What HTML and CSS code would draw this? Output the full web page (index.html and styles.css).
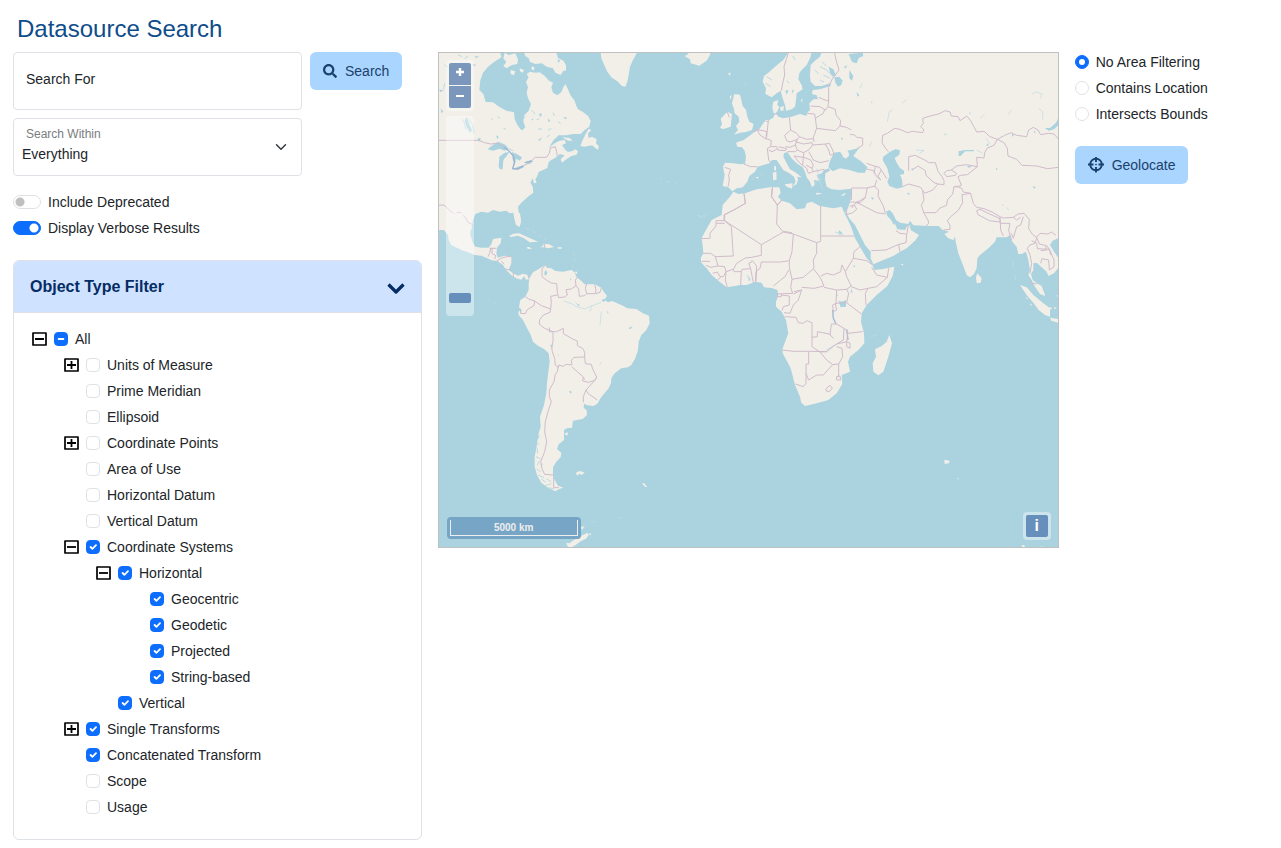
FILE: index.html
```html
<!DOCTYPE html>
<html lang="en">
<head>
<meta charset="utf-8">
<meta name="viewport" content="width=device-width, initial-scale=1">
<title>Datasource Search</title>
<link rel="stylesheet" href="styles.css">
</head>
<body>
<svg class="sprite" width="0" height="0" aria-hidden="true">
  <symbol id="plus" viewBox="0 0 15 14"><path d="M1 1H14V13H1Z" fill="none" stroke="#000" stroke-width="1.700" stroke-linejoin="round"/><path d="M3 7H12M7.500 3V11" stroke="#000" stroke-width="1.800"/></symbol>
  <symbol id="minus" viewBox="0 0 15 14"><path d="M1 1H14V13H1Z" fill="none" stroke="#000" stroke-width="1.700" stroke-linejoin="round"/><path d="M3 7H12" stroke="#000" stroke-width="1.800"/></symbol>
</svg>
<main class="page">
  <h1 class="title">Datasource Search</h1>
  <div class="columns">
    <form class="search" onsubmit="return false">
      <div class="search-row">
        <div class="fields">
          <div class="field">
            <input class="control" type="text" id="term">
            <label class="field-label" for="term">Search For</label>
          </div>
          <div class="field">
            <select class="control control-select" id="within"><option>Everything</option></select>
            <label class="field-label field-label-small" for="within">Search Within</label>
          </div>
        </div>
        <button class="btn" type="submit">
          <svg width="14" height="14" viewBox="0 0 512 512" fill="currentColor" aria-hidden="true"><path d="M505 442.700L405.300 343c-4.500-4.500-10.600-7-17-7H372c27.600-35.300 44-79.700 44-128C416 93.100 322.900 0 208 0S0 93.100 0 208s93.100 208 208 208c48.300 0 92.700-16.400 128-44v16.300c0 6.400 2.500 12.500 7 17l99.700 99.700c9.400 9.400 24.600 9.400 33.900 0l28.300-28.300c9.400-9.400 9.400-24.600.1-34zM208 336c-70.700 0-128-57.200-128-128 0-70.700 57.200-128 128-128 70.700 0 128 57.200 128 128 0 70.700-57.200 128-128 128z"/></svg>
          Search
        </button>
      </div>
      <div class="options">
        <label class="choice"><input class="switch" type="checkbox" role="switch">Include Deprecated</label>
        <label class="choice"><input class="switch" type="checkbox" role="switch" checked>Display Verbose Results</label>
      </div>
      <section class="card">
        <button class="card-head" type="button" aria-expanded="true">
          Object Type Filter
          <svg width="18" height="18" viewBox="0 0 18 18" fill="none" aria-hidden="true"><path d="M1.500 6.500L9 14L16.500 6.500" stroke="currentColor" stroke-width="3.200" stroke-linejoin="round"/></svg>
        </button>
        <ul class="tree tree-root">
          <li>
            <div class="node"><button class="toggle" type="button" aria-label="Collapse All"><svg><use href="#minus"/></svg></button><label class="choice"><input class="check check-mixed" type="checkbox" aria-checked="mixed">All</label></div>
            <ul class="tree">
              <li><div class="node"><button class="toggle" type="button" aria-label="Expand Units of Measure"><svg><use href="#plus"/></svg></button><label class="choice"><input class="check" type="checkbox">Units of Measure</label></div></li>
              <li><div class="node leaf"><label class="choice"><input class="check" type="checkbox">Prime Meridian</label></div></li>
              <li><div class="node leaf"><label class="choice"><input class="check" type="checkbox">Ellipsoid</label></div></li>
              <li><div class="node"><button class="toggle" type="button" aria-label="Expand Coordinate Points"><svg><use href="#plus"/></svg></button><label class="choice"><input class="check" type="checkbox">Coordinate Points</label></div></li>
              <li><div class="node leaf"><label class="choice"><input class="check" type="checkbox">Area of Use</label></div></li>
              <li><div class="node leaf"><label class="choice"><input class="check" type="checkbox">Horizontal Datum</label></div></li>
              <li><div class="node leaf"><label class="choice"><input class="check" type="checkbox">Vertical Datum</label></div></li>
              <li>
                <div class="node"><button class="toggle" type="button" aria-label="Collapse Coordinate Systems"><svg><use href="#minus"/></svg></button><label class="choice"><input class="check" type="checkbox" checked>Coordinate Systems</label></div>
                <ul class="tree">
                  <li>
                    <div class="node"><button class="toggle" type="button" aria-label="Collapse Horizontal"><svg><use href="#minus"/></svg></button><label class="choice"><input class="check" type="checkbox" checked>Horizontal</label></div>
                    <ul class="tree">
                      <li><div class="node leaf"><label class="choice"><input class="check" type="checkbox" checked>Geocentric</label></div></li>
                      <li><div class="node leaf"><label class="choice"><input class="check" type="checkbox" checked>Geodetic</label></div></li>
                      <li><div class="node leaf"><label class="choice"><input class="check" type="checkbox" checked>Projected</label></div></li>
                      <li><div class="node leaf"><label class="choice"><input class="check" type="checkbox" checked>String-based</label></div></li>
                    </ul>
                  </li>
                  <li><div class="node leaf"><label class="choice"><input class="check" type="checkbox" checked>Vertical</label></div></li>
                </ul>
              </li>
              <li><div class="node"><button class="toggle" type="button" aria-label="Expand Single Transforms"><svg><use href="#plus"/></svg></button><label class="choice"><input class="check" type="checkbox" checked>Single Transforms</label></div></li>
              <li><div class="node leaf"><label class="choice"><input class="check" type="checkbox" checked>Concatenated Transform</label></div></li>
              <li><div class="node leaf"><label class="choice"><input class="check" type="checkbox">Scope</label></div></li>
              <li><div class="node leaf"><label class="choice"><input class="check" type="checkbox">Usage</label></div></li>
            </ul>
          </li>
        </ul>
      </section>
    </form>

    <section class="map" aria-label="Map">
      <svg class="world" viewBox="0 0 1857 1482" preserveAspectRatio="xMidYMid slice" aria-hidden="true">
        <!-- North America, Greenland -->
        <g transform="translate(-3 -9)">
          <path class="land" d="M0,0L185,0 190,22 165,38 150,50 135,68 127,90 124,120 136,132 143,156 165,157 180,168 205,182 228,187 230,208 238,224 246,236 253,241 262,232 256,215 259,195 272,182 279,162 270,145 266,128 270,112 264,96 272,82 266,72 276,65 290,68 305,67 320,78 333,92 345,98 340,112 345,128 358,136 370,126 376,112 382,102 390,118 397,135 410,152 415,168 420,178 435,186 450,198 458,212 454,230 440,240 428,252 405,252 385,256 362,256 347,270 332,294 350,280 365,272 380,270 384,280 372,285 382,300 398,312 420,304 416,314 400,318 385,328 372,338 368,328 380,316 365,312 355,322 340,330 332,336 328,354 315,360 302,366 298,378 292,388 296,398 288,400 284,385 277,398 284,410 286,428 270,440 250,458 240,470 242,485 248,505 246,530 234,525 229,505 226,488 215,490 205,482 185,485 165,480 150,488 130,485 112,492 105,510 100,540 0,540Z"/>
          <path class="land" d="M256,0L262,18 272,25 276,36 292,42 312,40 326,50 345,55 352,68 368,75 376,62 384,62 384,46 376,32 360,24 352,0ZM200,8L212,15 232,10 240,28 238,42 222,45 205,55 196,48 205,36 196,25ZM218,60L232,64 228,76 218,72ZM245,55L258,60 254,68 246,64ZM282,48L290,54 286,62 280,56ZM487,0L490,25 500,48 508,65 520,82 540,95 552,108 562,110 568,95 572,75 576,50 585,30 596,10 598,0ZM452,236L444,250 434,270 427,288 440,290 462,286 480,300 482,288 474,280 476,268 462,260 452,264 450,250 460,240ZM388,306L402,304 412,298 420,304 408,314 392,316ZM372,262L395,264 404,272 390,272Z"/>
          <path class="water" d="M148,298L165,285 180,275 202,284 212,296 200,302 185,296 165,302ZM182,350L184,320 200,308 214,306 206,318 196,330 194,358 186,358ZM222,306L236,312 252,322 246,332 234,326 230,345 224,330ZM222,358L240,350 254,346 258,352 240,360ZM256,338L275,332 286,334 275,342ZM300,270L312,262 306,272ZM86,200L94,222 102,240 96,248 86,232 80,212ZM302,192L312,190 308,202ZM376,200L388,203 382,208ZM280,206L286,206 284,212ZM174,256L182,260 178,268ZM120,265L128,264 126,274 120,273ZM104,42L114,44 106,50ZM4,118L18,122 6,126ZM8,176L16,184 10,190ZM110,18L124,20 114,24ZM358,28L362,40 366,30ZM330,205L338,215 330,214Z"/>
          <path class="scratch" d="M72,206L80,222 84,240M92,206L104,224 108,250M60,14L72,20M80,26L90,18M20,44L28,52M16,118L20,100M280,180L292,192M300,238L312,236M326,262L336,254M212,296L226,302M345,188L350,198M196,234L204,238M255,205L262,200M178,200L186,204M295,210L304,206M330,240L340,236M160,205L166,210M360,215L368,220"/>
          <path class="border" d="M0,271H122L140,278 158,282 178,280 196,290 214,304 228,318 230,336 224,356 240,358 258,346 272,340 292,322 325,322 334,310 337,294 352,290 356,306 358,320M0,466L18,465 34,480 48,492 66,486 80,502 90,512"/>
          <path class="lake-line" d="M198,292L214,304 226,318 230,336 224,356 240,356 256,348M262,338L282,332"/>
        </g>
        <!-- Central and South America -->
        <g transform="translate(-3 486)">
          <path class="land" d="M0,-5L102,-5 106,8 98,30 97,60 105,85 112,95 130,98 152,98 160,88 165,72 190,68 188,85 178,97 175,115 180,128 200,122 220,125 220,145 212,165 225,175 240,182 255,176 270,180 274,192 264,194 258,184 250,194 235,190 222,182 205,165 195,150 178,138 160,136 148,130 130,122 110,120 90,112 70,105 40,90 32,75 30,60 15,42 0,30ZM228,-5L246,-5 249,20 244,36 234,24 229,8Z"/>
          <path class="land" d="M274,190L285,172 302,162 322,150 326,158 340,160 352,168 375,170 400,165 410,172 415,185 430,198 440,208 470,208 490,218 497,230 507,242 500,255 510,262 522,258 550,270 568,280 595,282 615,295 633,302 635,325 625,345 610,360 602,380 600,405 592,430 580,450 570,457 550,460 530,475 520,490 519,505 512,520 502,532 490,546 478,566 466,573 448,571 438,566 437,578 446,586 447,600 434,612 405,617 402,638 386,640 378,645 378,675 362,688 357,702 370,713 368,727 355,740 345,757 345,782 350,795 360,812 376,818 364,822 352,829 330,818 310,803 297,780 290,755 290,725 296,695 302,655 308,635 306,605 318,570 325,535 327,505 331,470 335,440 332,415 318,402 300,392 285,380 278,360 265,335 255,315 242,300 241,290 248,285 243,275 247,255 262,245 272,225 272,205Z"/>
          <path class="land" d="M213,63L226,56 244,55 266,65 282,72 300,80 275,82 258,70 240,62 218,66ZM306,97L316,92 316,86 334,88 348,96 330,100 320,97ZM265,97L274,96 282,101 270,102ZM358,97L371,97 371,101 360,101ZM413,774L424,768 440,772 432,780 424,776 418,782ZM378,656L390,652 388,662ZM410,170L418,170 416,178ZM612,806L618,804 628,816 622,816Z"/>
          <path class="faint" d="M262,38L274,44M284,48L294,56M300,60L308,68M316,70L324,74M404,110L410,122M410,130L410,142M406,152L402,160M150,255L154,258M166,262L172,265M460,920H472M540,908L552,910"/>
          <path class="water" d="M320,170L324,165 328,175 323,182 319,178ZM396,190L400,192 396,198ZM335,388L345,392 342,400ZM246,278L252,288 246,292ZM570,340L584,334 578,342ZM392,527L402,530 398,536ZM508,288L512,292 508,296ZM418,266L426,270 420,274ZM490,255L504,250 498,262Z"/>
          <path class="scratch thin" d="M378,258L400,266 418,276 440,282 462,272 490,262M462,272L455,290M490,290L486,330M420,270L412,262M360,418L362,424M484,450L490,442"/>
          <path class="scratch" d="M294,680L304,690M298,700V715M294,725L308,732M304,738L298,750M296,762L308,770M300,780L318,788M310,792L324,802M322,812L340,806M326,792L340,800M332,818L348,822M312,745V752M304,660L300,672"/>
          <path class="border" d="M322,150L312,162 312,185 325,195 340,204 356,206 358,232 362,248 380,246 388,240 384,224 400,222 414,212 412,195 420,185M414,212L422,222 424,244 440,242 446,236 442,220 446,206M446,236L472,236 474,226 470,208M474,236L486,232 490,218M262,245L272,252 290,258 310,272 338,282 340,262 338,244 358,240M290,258L288,272 268,284 262,296 248,295 247,288M338,282L336,292 316,300 305,314 304,328 320,340 334,346 345,350 345,380 341,396 343,410 350,430 352,450 362,458M334,338L334,350 356,350 376,340 376,356 404,372 418,378 418,392 434,400 440,412 440,426 408,427 400,436 402,450 384,448 376,454 362,450 358,470 352,478 348,500 334,525 334,545 340,560 330,590 322,620 320,650 326,680 320,710 308,740 312,762 320,778 346,780M347,785V818H362M440,426L442,446 460,448 464,462 476,486 470,496 452,502 434,498 436,486 402,456M436,486L440,494M476,490L444,525 450,535 478,555M444,525L436,545 436,562M158,100L155,115 150,125M155,100H176M162,98V116L174,122 170,132M176,138L190,130 202,126 220,124M190,138L198,148M202,162L216,165M226,172V186M270,180L272,190M74,0L84,10 90,22 102,28M320,86V98"/>
        </g>
        <!-- Africa, Madagascar -->
        <g transform="translate(753 381)">
          <path class="land" d="M462,95L470,112 485,145 495,175 510,200 530,235 548,255 552,270 575,268 613,260 608,288 592,318 560,345 530,375 515,400 513,425 522,460 523,490 505,510 480,530 474,545 480,575 455,585 457,612 440,640 415,660 380,670 345,678 334,668 330,650 315,615 305,575 300,560 278,520 278,505 295,460 288,420 275,395 258,380 258,365 265,345 262,330 245,324 222,322 215,308 195,305 170,315 150,315 135,318 110,322 85,302 65,285 50,265 35,250 32,235 40,220 38,195 35,175 45,155 65,120 95,105 98,75 120,50 130,35 145,42 165,40 200,28 240,22 268,22 272,38 264,50 275,62 300,70 320,88 345,85 350,70 365,65 390,78 430,85 455,80Z"/>
          <path class="land" d="M598,465L606,490 595,530 580,575 565,586 550,575 548,550 558,530 555,508 575,498 590,485Z"/>
          <path class="water" d="M446,362L456,365 468,360 468,380 452,382ZM176,290L182,298 176,304ZM484,325L488,340 482,336ZM490,256L497,258 492,262ZM440,342L444,346 438,350ZM446,150L458,160 448,164Z"/>
          <path class="faint" d="M30,112L44,106M24,104L30,110M230,358L234,362M545,470L560,464M205,390L208,392"/>
          <path class="scratch" d="M410,510L436,494M436,156L458,164M172,285L180,302M460,90L470,112"/>
          <path class="lake-line" d="M428,390L430,415 438,432M470,448L474,480"/>
          <path class="border" d="M162,40L166,70 135,88 104,104V122L214,194 280,156 310,162 380,188 392,184V78M246,25L244,50 262,75 260,132 278,154 306,158M262,75L275,62M392,168H492M104,122L78,122 78,138 60,160 60,175 34,176M104,130H80M124,140L130,228 76,230 62,220 38,220M124,140L104,122M214,194L214,226 184,232 166,234 140,250 130,268 108,275 104,260 84,258 76,230M214,246H272L298,242 300,235 306,215 310,162M380,188V220L370,240 372,265 340,292 306,298 298,262 298,242M36,244H60M48,256L62,262 84,258M68,280L82,276 90,290 100,290 108,275 106,300 112,322M82,300L92,292M130,268L132,275 154,275 152,315M154,275L156,268 182,266 190,308M182,266L176,250 186,245M196,305L198,275 210,265 214,246M185,240L200,258 198,305M250,318L272,300 285,290 296,270M306,298L302,322 308,340 258,342M258,350H274V342M310,342L335,330 325,360 310,375 300,400 282,398M274,345L298,348 298,375 280,380 276,392M335,330L312,335M335,322L372,325 402,318 392,295 372,268M392,288L410,280 430,285 452,275 456,255 466,275 470,290 484,318 470,328 440,330 402,322M466,275L490,235 492,215 510,200M490,235L530,242 548,255M545,262L560,285 592,292 560,320 534,325 510,330 484,320M592,292L596,265M534,325L526,340 528,375M440,330L438,370 470,368 476,340 470,328M470,368L514,402M438,370L428,375 430,395 440,390 436,372M440,432L424,432 420,465 430,475 418,462 382,455 382,470 366,472V428L350,422 340,430 325,428 318,412 284,410M440,432L462,445 460,480 435,495 410,515 390,516 366,500V470M278,510L310,514 366,514 410,515M475,460L518,455M462,445L474,455 470,485 480,490 480,505 470,500 470,485 440,492M356,516V552H348V610L340,620 316,612M390,516L410,540 428,554 446,552 458,530 456,505 440,500M428,554L400,585 380,585 356,600 348,580M446,552L446,590M440,590L450,588 452,600 440,600ZM408,626L420,616 427,624 418,635 408,632Z"/>
        </g>
        <!-- Asia -->
        <g transform="translate(1233 381)">
          <path class="land" d="M-5,-400L640,-400 640,172 625,174 608,182 600,195 612,215 626,235 626,262 612,280 595,288 590,275 575,262 560,248 550,250 550,270 543,282 548,300 560,310 575,318 586,348 570,342 555,320 545,300 535,285 540,270 535,240 528,215 515,222 505,222 500,200 487,185 480,165 470,172 440,172 435,185 415,205 390,225 382,235 380,265 372,282 360,292 350,285 340,258 325,220 318,190 315,170 310,180 295,175 283,162 297,155 278,150 266,138 235,138 190,136 180,122 175,132 150,128 138,120 128,100 118,90 108,95 112,108 125,122 130,135 134,130 142,148 165,150 172,138 180,136 182,150 207,165 195,182 170,205 150,215 130,228 100,240 70,253 62,235 62,215 45,195 30,165 15,135 0,118 -14,96 -6,85 2,60 5,22Z"/>
          <path class="land" d="M382,280L395,295 392,308 380,310 378,292ZM510,315L530,322 550,345 580,370 600,385 600,410 585,405 566,390 550,368 530,345ZM600,413L630,418 630,430 604,422ZM598,380L606,384 602,390ZM528,350L534,356 530,358ZM540,370L546,374 542,378ZM152,252L160,252 158,257ZM612,380L620,384 614,388ZM620,345L628,348 626,356Z"/>
          <path class="water" d="M100,-70L120,-85 136,-92 150,-90 148,-76 134,-66 140,-52 150,-36 162,-28 162,-18 150,-16 156,-2 158,22 140,26 118,18 112,5 118,-10 112,-35 98,-60ZM326,-86L345,-90 372,-90 372,-86 345,-86 332,-72 326,-72ZM584,-156L600,-156 618,-172 627,-190 627,-166 612,-152 596,-148ZM350,-42L364,-42 358,-36ZM184,-36L190,-34 186,-28ZM548,18L558,22 552,26ZM486,-140L492,-134 486,-130ZM552,-150L557,-142 553,-140ZM172,38L180,40 174,46ZM20,-265L28,-254 22,-250ZM410,-110L418,-104 410,-102ZM64,-236L68,-232 64,-230ZM284,-140L290,-136 284,-134ZM438,-36L444,-32 438,-30ZM64,50L72,55 66,60Z"/>
          <path class="scratch thin" d="M112,-175L118,-205 128,-210M156,-230L170,-242M545,-258L560,-264 575,-258 572,-245M566,-215L578,-205 578,-182M474,-195L484,-210M390,-185L404,-198M198,-90L222,-88 208,-80M380,-90L398,-80M36,-290L30,-275M66,-115L58,-100M408,-125L420,-108M360,-196V-205M470,82L476,90M456,72L460,78"/>
          <path class="faint" d="M490,245L488,265M494,285L498,300"/>
        </g>
        <!-- Europe -->
        <g transform="translate(603 -9)">
          <path class="land" d="M450,0L440,15 430,30 415,42 400,55 385,68 372,78 368,95 378,115 376,132 395,142 410,130 422,122 428,145 435,165 438,182 455,178 465,170 468,150 470,130 488,118 485,105 475,88 478,70 485,60 500,45 512,20 515,0Z"/>
          <path class="land" d="M548,0L540,20 525,32 512,45 510,75 512,95 525,108 545,108 570,100 572,108 540,118 518,120 516,132 530,136 534,148 520,148 508,160 510,180 500,190 500,198 480,192 455,200 430,205 415,200 408,190 400,188 397,170 400,155 415,150 412,165 418,170 412,184 404,192 400,203 388,210 378,210 368,222 358,238 340,248 328,258 318,265 312,270 300,274 288,278 292,290 306,292 314,302 318,320 315,342 300,343 280,340 255,338 249,350 254,375 248,408 265,412 277,424 290,415 308,412 322,395 328,378 345,365 353,350 370,345 388,340 396,330 410,330 420,345 430,360 448,370 462,380 467,395 458,410 470,402 474,390 472,380 485,382 468,368 450,358 440,340 430,320 432,310 442,306 455,325 470,340 488,352 495,365 500,382 510,395 516,412 524,404 522,390 538,392 530,376 545,370 552,360 567,355 570,362 556,370 555,390 560,410 575,418 600,420 645,415 645,-10Z"/>
          <path class="land" d="M283,132L300,134 304,150 308,168 318,180 322,200 328,215 341,222 336,240 318,246 300,248 282,254 294,240 288,228 298,215 296,200 284,190 282,178 276,160ZM262,185L276,192 274,210 272,230 250,237 240,234 246,222 242,206 252,196ZM135,0L146,12 134,18 150,28 152,40 178,47 200,32 210,15 212,0ZM434,403L458,400 456,416 440,410ZM398,368L409,365 410,388 400,392ZM403,348L408,348 408,362 402,360ZM528,428L548,430 530,434ZM602,436L618,428 612,437ZM346,382L356,380 354,386ZM420,172L432,168 430,182 422,182ZM264,70L272,68 270,78ZM270,138L276,136 270,150ZM502,372L510,372 520,384 514,390ZM482,152L488,145 486,156Z"/>
          <path class="faint" d="M315,96L318,108M60,385L66,388M80,394L90,396M105,400L114,404M170,496L180,500M190,505L204,490M530,355L548,420M524,400L545,385M336,388L342,384M362,372L370,376"/>
          <path class="water" d="M565,352L570,332 582,308 600,305 612,322 628,312 622,302 658,294 650,304 640,318 665,335 682,352 675,368 655,368 628,360 600,355 578,364ZM583,82L598,80 608,92 604,105 594,110 586,98ZM436,122L446,120 440,134ZM458,118L462,122 455,132ZM626,12L668,8 670,18 656,24 650,40 636,36 630,22ZM612,50L622,46 616,56ZM628,60L640,78 636,92 628,85ZM566,50L580,58 588,75 578,80 570,68ZM604,262L610,266 604,270Z"/>
          <path class="land" d="M608,314L622,308 628,316 618,326 608,320Z"/>
          <path class="scratch" d="M540,50L560,60 575,76M550,75L570,85M525,60L536,72M546,36L560,48M458,18L466,30M440,92L448,100M380,80L396,90M376,100L392,110M540,90L552,96"/>
          <path class="border" d="M446,5L440,25 432,50 434,75 428,100 424,122M582,0L588,30 597,60 575,90 566,112 566,152M536,142L560,152 566,150 564,170 586,178 588,195 602,212 600,228 620,232 634,240M512,168L540,170 556,180 564,170M500,190L524,192 526,205 550,190 554,178M526,205L530,235 586,242 600,228M530,235L520,262 522,276M448,202L452,240 434,256 440,272 450,276 472,268 478,260 500,268 520,266M452,240L470,250 478,260M472,268L466,285 450,292 436,290M466,275L490,282 516,278 518,285 506,300 490,308 472,300 466,285M518,285L556,282 566,300 570,315 582,314 578,300 568,280 556,282M506,305L520,330 540,338 566,332M442,305H466L472,300M462,318L490,322 492,308M462,318L480,340 488,346 490,322M492,322L512,330 520,345 516,355 498,345M516,355L520,365 552,358M552,358L556,368M488,346L500,355 505,370 520,365M340,245L352,240 370,242 380,245 378,265 394,272 392,290 382,295 386,330 392,338M378,215L388,212M385,212L380,260M352,240L360,255 380,268M392,290L410,290 414,300 436,302 440,296 416,290M410,298L396,305 386,300M402,192H412M262,186L268,202M254,352L272,358 266,375 268,390 264,410M312,342L332,350 352,350M312,430L316,460 285,478 252,495V512M398,412L395,440 412,465 425,450"/>
        </g>
        <!-- Middle East and Asian borders -->
        <g transform="translate(1233 381)">
          <path class="border" d="M0,-137L14,-135 20,-128 38,-126V-104L22,-95M115,-85L106,-96 96,-112 98,-134 112,-140 134,-155 150,-152 172,-142 188,-146 218,-142 222,-150 212,-160 220,-170 218,-185 240,-192 266,-198 286,-208 300,-204 304,-192 324,-190 330,-178 350,-192 362,-178 380,-144 402,-146 420,-130 442,-122 464,-134 484,-142 500,-134 530,-130 536,-150 550,-158 564,-150 572,-136 596,-140 612,-138 626,-122M442,-122L432,-104 412,-96 404,-82 402,-66 380,-68 382,-40M442,-122L462,-112 472,-95 474,-72 500,-62 516,-44 560,-42 592,-34 626,-38M382,-40L352,-16 332,-14 324,-10 334,16 316,22M382,-40L350,-46 320,-42 304,-30 290,-28 282,-20 290,-10 316,-14 320,-20 304,-30M176,-28V-70L196,-74 228,-58 236,-52 256,-52 264,-26 276,-10 282,2 282,14 264,12 252,8 228,-14 226,-28 204,-42 186,-30M158,20L176,12 212,22 224,40 248,30 264,12M310,22L316,18 334,24 340,36 362,40 370,70 380,82 402,86 426,96 450,110 460,114 490,112 504,102 522,100 538,118 536,146 548,164 560,172 570,160 594,162 604,156 618,166M218,32L222,60 214,76 222,100 234,120 236,130 228,138M222,98L258,98 270,84 290,76 292,60 308,42 312,20M362,40L336,44 338,68 324,92 302,110 292,122 300,136 300,148 280,150M380,92L390,88 410,98 450,116 450,126 418,122 384,104ZM450,130H480L476,150 484,180M450,112L452,150 460,168M490,112L500,120 512,112M484,160L490,175 500,140 512,135 520,110M560,172L555,190 540,195 532,205 540,225 545,250 540,280M560,172L568,192 586,196 590,210 572,212M590,196L602,215 612,240 612,260 598,270 596,240 576,236 572,250M545,182L560,190 562,206 598,208 602,225M50,-50L72,-42 88,-38 94,-30M50,-33L70,-28 80,-10 92,0 84,-12 94,-30 104,-14 110,-4M76,-40L72,-20M80,0L74,20 86,30 84,48 100,78 106,100M5,24H50L76,18M52,24L46,52 30,62 18,68 5,84M5,24L4,60M0,66H12L30,72 80,98 106,102M-10,88V104L8,98 20,88 14,76 0,78M18,66L30,68 48,52M64,212L108,210 144,194 168,188 170,164 174,140M146,194L150,215M138,152L150,160 168,162M172,135L178,142M540,308L560,312"/>
        </g>
        <!-- Antarctica and southern islands -->
        <g transform="translate(-3 981)">
          <path class="land" d="M385,488L395,490 402,484 412,478 425,476 432,466 442,462 448,458 452,466 444,476 428,484 412,496 396,504 388,498ZM402,464L412,460 406,470ZM428,442L440,438 432,450ZM452,460L462,462 454,466Z"/>
        </g>
        <g transform="translate(1383 1161)">
          <path class="land" d="M133,60L140,60 150,64 146,70 134,72ZM171,114L176,115 175,119ZM366,316L372,315 376,322 365,322ZM422,319L428,320 426,323Z"/>
        </g>
      </svg>
      <div class="zoom">
        <button class="map-btn map-btn-top" type="button" aria-label="Zoom in"><svg width="10" height="12" viewBox="0 0 10 12"><path d="M5 0V8M1 4H9" stroke="#fff" stroke-width="2.400"/></svg></button>
        <button class="map-btn map-btn-bottom" type="button" aria-label="Zoom out"><svg width="10" height="12" viewBox="0 0 10 12"><path d="M1 5H9" stroke="#fff" stroke-width="2"/></svg></button>
      </div>
      <div class="zoom-track"><button class="zoom-thumb" type="button" aria-label="Zoom level"></button></div>
      <div class="scale"><div class="scale-bar">5000 km</div></div>
      <div class="info"><button class="map-btn info-btn" type="button" aria-label="Attributions">i</button></div>
    </section>

    <aside class="area">
      <div class="area-options">
        <label class="choice"><input class="radio" type="radio" name="area" checked>No Area Filtering</label>
        <label class="choice"><input class="radio" type="radio" name="area">Contains Location</label>
        <label class="choice"><input class="radio" type="radio" name="area">Intersects Bounds</label>
      </div>
      <button class="btn" type="button">
        <svg class="crosshair" width="16" height="16" viewBox="0 0 16 16" fill="none" stroke="currentColor" aria-hidden="true"><circle cx="8" cy="7.500" r="5.800" stroke-width="1.900"/><path d="M8 0V5M8 10V15.500M0 7.500H5.500M10.500 7.500H16" stroke-width="1.900"/><circle cx="8" cy="7.500" r=".5" stroke-width="1"/></svg>
        Geolocate
      </button>
    </aside>
  </div>
</main>
</body>
</html>
```
FILE: styles.css
```css
* { box-sizing: border-box; }

body {
  margin: 0;
  background: #fff;
  color: #212529;
  font: 14px/20px "Liberation Sans", Arial, sans-serif;
}

button, input, select { font: inherit; color: inherit; margin: 0; }
button { cursor: pointer; }
.sprite { position: absolute; }

.page { padding: 15px 10px 8px 13px; }
.title {
  margin: 0 0 9px;
  padding-left: 4px;
  color: #0f4c8a;
  font-size: 24px;
  font-weight: 400;
  line-height: 28px;
}
.columns {
  display: grid;
  grid-template-columns: repeat(12, minmax(0, 1fr));
  gap: 16px;
  align-items: start;
}
.search { grid-column: span 4; }
.map { grid-column: span 6; }
.area { grid-column: span 2; }

/* Search form */
.search-row { display: flex; align-items: flex-start; gap: 8px; }
.fields { flex: 0 1 289px; display: grid; gap: 8px; }
.field { position: relative; }
.control {
  display: block;
  width: 100%;
  height: 58px;
  padding: 22px 12px 8px;
  border: 1px solid #dee2e6;
  border-radius: 4px;
  background: #fff;
  appearance: none;
}
.control-select {
  padding-left: 8px;
  background: #fff url("data:image/svg+xml,%3csvg xmlns='http://www.w3.org/2000/svg' viewBox='0 0 16 16'%3e%3cpath fill='none' stroke='%23343a40' stroke-linecap='round' stroke-linejoin='round' stroke-width='2' d='m2 5 6 6 6-6'/%3e%3c/svg%3e") no-repeat right 12px center / 16px 12px;
}
.field-label {
  position: absolute;
  top: 17px;
  left: 13px;
  pointer-events: none;
}
.field-label-small {
  top: 6px;
  color: #7a7d80;
  font-size: 12px;
}
.btn {
  display: inline-flex;
  align-items: center;
  gap: 8px;
  height: 38px;
  padding: 0 13px;
  border: 0;
  border-radius: 6px;
  background: #aad5ff;
  color: #1b416d;
  white-space: nowrap;
}

/* Choices */
.options { display: grid; gap: 6px; margin: 16px 0 22px; }
.choice { display: flex; align-items: center; gap: 7px; }
.switch, .check, .radio {
  flex: none;
  width: 14px;
  height: 14px;
  border: 1px solid #dee2e6;
  background: #fff center / contain no-repeat;
  appearance: none;
}
.check { border-radius: 4px; }
.radio { border-radius: 50%; }
.check:checked, .check-mixed, .radio:checked, .switch:checked {
  border-color: #0d6efd;
  background-color: #0d6efd;
}
.check:checked { background-image: url("data:image/svg+xml,%3csvg xmlns='http://www.w3.org/2000/svg' viewBox='0 0 20 20'%3e%3cpath fill='none' stroke='%23fff' stroke-linecap='round' stroke-linejoin='round' stroke-width='3' d='m6 10 3 3 6-6'/%3e%3c/svg%3e"); }
.check-mixed { background-image: url("data:image/svg+xml,%3csvg xmlns='http://www.w3.org/2000/svg' viewBox='0 0 20 20'%3e%3cpath fill='none' stroke='%23fff' stroke-linecap='round' stroke-width='3' d='M6 10h8'/%3e%3c/svg%3e"); }
.radio:checked { background-image: url("data:image/svg+xml,%3csvg xmlns='http://www.w3.org/2000/svg' viewBox='-4 -4 8 8'%3e%3ccircle r='2' fill='%23fff'/%3e%3c/svg%3e"); }
.switch {
  width: 28px;
  border-radius: 7px;
  background-image: radial-gradient(circle at 6px 6px, #bfbfbf 4px, transparent 5px);
}
.switch:checked { background-image: radial-gradient(circle at 20px 6px, #fff 4px, transparent 5px); }

/* Object type filter */
.card { border: 1px solid #dee2e6; border-radius: 6px; overflow: hidden; }
.card-head {
  display: flex;
  align-items: center;
  justify-content: space-between;
  width: 100%;
  height: 52px;
  padding: 0 16px;
  border: 0;
  border-bottom: 1px solid #dee2e6;
  background: #cfe2ff;
  color: #052c65;
  font-size: 16px;
  font-weight: 700;
}
.tree { display: grid; gap: 6px; margin: 6px 0 0; padding: 0 0 0 32px; list-style: none; }
.tree-root { margin: 0; padding: 16px 18px 22px; }
.node { display: flex; align-items: center; gap: 7px; }
.leaf { padding-left: 22px; }
.toggle {
  width: 15px;
  height: 14px;
  padding: 0;
  border: 0;
  background: none;
}
.toggle svg { display: block; width: 15px; height: 14px; }

/* Map */
.map {
  position: relative;
  aspect-ratio: 621 / 496;
  border: 1px solid #c0c0c0;
  background: #aad3df;
  overflow: hidden;
}
.world { display: block; width: 100%; height: 100%; }
.land { fill: #f2efe9; }
.water { fill: #aad3df; }
.border, .scratch, .faint, .lake-line { fill: none; stroke-linejoin: round; }
.border { stroke: #d0bccb; stroke-width: 3; }
.scratch { stroke: #bcdae1; stroke-width: 3; }
.thin { stroke-width: 2; }
.faint { stroke: #c0dce2; stroke-width: 2; }
.lake-line { stroke: #9bb7d3; stroke-width: 4; }
.zoom, .zoom-track, .info {
  position: absolute;
  width: 28px;
  padding: 3px;
  border-radius: 4px;
  background: rgba(255, 255, 255, .4);
}
.zoom { top: 7px; left: 7px; display: grid; gap: 1px; }
.zoom-track { top: 63px; left: 7px; height: 200px; padding-top: 177px; }
.zoom-thumb {
  display: block;
  width: 22px;
  height: 10px;
  padding: 0;
  border: 0;
  border-radius: 2px;
  background: #668fbb;
}
.map-btn {
  display: grid;
  place-items: center;
  width: 22px;
  height: 22px;
  padding: 0;
  border: 0;
  border-radius: 2px;
  background: #7b98bc;
  color: #fff;
}
.map-btn-top { border-radius: 2px 2px 0 0; }
.map-btn-bottom { border-radius: 0 0 2px 2px; }
.info { right: 7px; bottom: 7px; }
.info-btn { background: #668fbb; font-size: 16px; font-weight: 700; }
.scale {
  position: absolute;
  left: 8px;
  bottom: 8px;
  padding: 3px;
  border-radius: 4px;
  background: #77a5c6;
}
.scale-bar {
  width: 128px;
  border: 1px solid #eee;
  border-top: 0;
  color: #eee;
  font-size: 10px;
  font-weight: 700;
  line-height: 15px;
  text-align: center;
}

/* Area filter */
.area-options { display: grid; gap: 6px; margin-bottom: 22px; }
```
